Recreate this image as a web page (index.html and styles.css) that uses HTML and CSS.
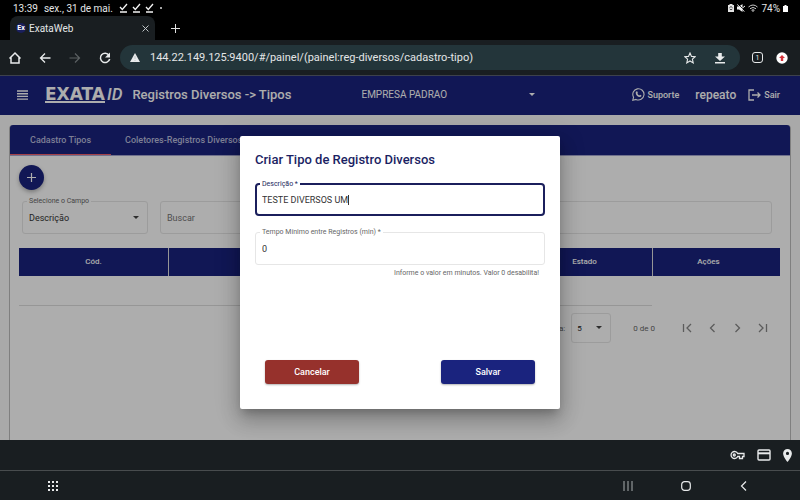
FILE: index.html
```html
<!DOCTYPE html>
<html lang="pt-BR">
<head>
<meta charset="utf-8">
<meta name="viewport" content="width=device-width, initial-scale=1">
<title>ExataWeb</title>
<link rel="stylesheet" href="styles.css">
</head>
<body>
<div class="status">
  <span>13:39</span>
  <span>sex., 31 de mai.</span>
  <span class="checks">
    <svg width="9" height="10" viewBox="0 0 9 10"><path d="M1 4l2.300 2.500L8 1M1 9h7"/></svg>
    <svg width="9" height="10" viewBox="0 0 9 10"><path d="M1 4l2.300 2.500L8 1M1 9h7"/></svg>
    <svg width="9" height="10" viewBox="0 0 9 10"><path d="M1 4l2.300 2.500L8 1M1 9h7"/></svg>
  </span>
  <span class="dot"></span>
  <span class="status-right">
    <svg width="6" height="8" viewBox="0 0 6 8"><path fill="#e4e4e4" d="M1.500 0h3v1H6v7H0V1h1.500z"/><path d="M1.700 4.800a1.400 1.400 0 0 0 2.600 0M1.700 3.600a1.400 1.400 0 0 1 2.600 0" fill="none" stroke="#111" stroke-width=".8"/></svg>
    <svg width="8" height="8" viewBox="0 0 8 8"><path fill="#f0f0f0" d="M0 2.500h2L5.500 0v8L2 5.500H0z"/><path d="M1 0l7 7" stroke="#000" stroke-width=".8"/><path d="M.3 .5L7.500 7.700M5.500 4L8 2" stroke="#f0f0f0"/></svg>
    <svg width="10" height="8" viewBox="0 0 10 8" fill="none" stroke="#c8c8c8"><path d="M.5 3Q5-1 9.500 3M2 4.700q3-2.500 6 0M3.500 6.300q1.500-1.200 3 0"/><path d="M5 6v2"/></svg>
    <span>74%</span>
    <svg width="5" height="7" viewBox="0 0 5 7"><path fill="#fff" d="M1.500 0h2v1H5v6H0V1h1.500z"/></svg>
  </span>
</div>
<div class="tabstrip">
  <div class="browser-tab">
    <span class="favicon">Ex</span>
    <span class="tab-title">ExataWeb</span>
    <button class="icon-btn" aria-label="Fechar guia"><svg width="7" height="7" viewBox="0 0 7 7"><path d="M.5.5l6 6M6.500.5l-6 6" stroke="#bfc4c6"/></svg></button>
  </div>
  <button class="icon-btn" aria-label="Nova guia"><svg width="9" height="9" viewBox="0 0 9 9"><path d="M4.500 0v9M0 4.500h9" stroke="#e0e0e0"/></svg></button>
</div>
<div class="toolbar">
  <button class="icon-btn" aria-label="Início"><svg width="14" height="14" viewBox="0 0 14 14"><path d="M1.500 7.500L7 2l5.500 5.500M3 6.500V12h8V6.500" fill="none" stroke="#e8eaeb" stroke-width="1.500"/></svg></button>
  <button class="icon-btn" aria-label="Voltar"><svg width="14" height="14" viewBox="0 0 14 14"><path d="M12.500 7h-10M7 2.500L2.500 7l4.500 4.500" fill="none" stroke="#e8eaeb" stroke-width="1.300"/></svg></button>
  <button class="icon-btn" aria-label="Avançar"><svg width="14" height="14" viewBox="0 0 14 14"><path d="M1.500 7h10M7 2.500l4.500 4.500L7 11.500" fill="none" stroke="#5c6163" stroke-width="1.200"/></svg></button>
  <button class="icon-btn" aria-label="Recarregar"><svg width="14" height="14" viewBox="0 0 14 14"><path d="M11 4.200A4.700 4.700 0 1 0 11.700 8" fill="none" stroke="#e8eaeb" stroke-width="1.500"/><path d="M12 1.500V6.500H7z" fill="#e8eaeb"/></svg></button>
  <div class="address">
    <svg width="10" height="9" viewBox="0 0 10 9"><path d="M5 0l5 9H0z" fill="#e8eaeb"/><path d="M5 3v3M5 7v1" stroke="#b7bfc1" stroke-width=".8"/></svg>
    <input class="url" aria-label="Endereço" value="144.22.149.125:9400/#/painel/(painel:reg-diversos/cadastro-tipo)">
    <button class="icon-btn" aria-label="Favoritar"><svg width="12" height="12" viewBox="0 0 12 12"><path d="M6 1l1.500 3.400 3.700.3-2.800 2.500.8 3.700L6 9l-3.200 1.900.8-3.700L.8 4.700l3.700-.3z" fill="none" stroke="#e8eaeb" stroke-width="1.100"/></svg></button>
    <button class="icon-btn" aria-label="Baixar"><svg width="10" height="12" viewBox="0 0 10 12"><path d="M3.200 1h3.600v3.500H10L5 9 0 4.500h3.200zM0 10h10v1.500H0z" fill="#e8eaeb"/></svg></button>
  </div>
  <button class="tab-count" aria-label="Guias abertas">1</button>
  <button class="icon-btn" aria-label="Atualizar navegador"><svg width="12" height="12" viewBox="0 0 12 12"><circle cx="6" cy="6" r="5.700" fill="#fff"/><path d="M6 3l3 3H7.200v3H4.800V6H3z" fill="#d3323a"/></svg></button>
</div>
<div class="page">
  <header class="app-header">
    <button class="icon-btn" aria-label="Menu"><svg width="11" height="10" viewBox="0 0 11 10"><path d="M0 1h11M0 3.700h11M0 6.400h11M0 9.100h11" stroke="#fff" stroke-width="1.400"/></svg></button>
    <div class="logo"><b>EXATA</b><i>ID</i></div>
    <h1>Registros Diversos -&gt; Tipos</h1>
    <div class="select-wrap company">
      <select aria-label="Empresa"><option>EMPRESA PADRAO</option></select>
      <svg class="caret" width="6" height="3" viewBox="0 0 6 3"><path d="M0 0h6L3 3z" fill="#fff"/></svg>
    </div>
    <a class="support" href="#suporte"><svg width="13" height="13" viewBox="0 0 13 13"><path d="M.8 12.200l.8-3A5.600 5.600 0 1 1 4 11.400z" fill="none" stroke="#fff" stroke-width="1.100"/><path d="M4.200 3.500l1-.2.7 1.600-.5.8q.7 1.200 1.900 1.800l.7-.7 1.500.7q0 1.400-1.500 1.600Q4 8.500 3.700 4.900q0-.9.500-1.400z" fill="#fff"/></svg>Suporte</a>
    <span class="user">repeato</span>
    <a class="exit" href="#sair"><svg width="13" height="12" viewBox="0 0 13 12" fill="none" stroke="#fff" stroke-width="1.300"><path d="M6 1H1v10h5M4 6h8M9.500 3.500L12 6 9.500 8.500"/></svg>Sair</a>
  </header>
  <main class="card">
    <nav class="tabs">
      <a class="active" href="#tipos">Cadastro Tipos</a>
      <a href="#coletores">Coletores-Registros Diversos</a>
    </nav>
    <div class="card-body">
      <button class="fab" aria-label="Adicionar"><svg width="9" height="9" viewBox="0 0 9 9"><path d="M4.500 0v9M0 4.500h9" stroke="#fff" stroke-width="1.200"/></svg></button>
      <div class="filters">
        <div class="field select-wrap filter-field">
          <label for="campo">Selecione o Campo</label>
          <select id="campo"><option>Descrição</option></select>
          <svg class="caret" width="6" height="3" viewBox="0 0 6 3"><path d="M0 0h6L3 3z" fill="#444"/></svg>
        </div>
        <div class="field search-field">
          <input type="text" aria-label="Buscar" placeholder="Buscar">
        </div>
      </div>
      <table>
        <colgroup><col class="c-code"><col><col class="c-state"><col class="c-actions"></colgroup>
        <thead><tr><th>Cód.</th><th>Descrição</th><th>Estado</th><th class="actions">Ações</th></tr></thead>
        <tbody><tr><td></td><td></td><td></td><td class="blank"></td></tr></tbody>
      </table>
      <div class="paginator">
        <label for="itens">Itens por página:</label>
        <div class="select-wrap page-size">
          <select id="itens"><option>5</option></select>
          <svg class="caret" width="6" height="3" viewBox="0 0 6 3"><path d="M0 0h6L3 3z" fill="#444"/></svg>
        </div>
        <span class="range">0 de 0</span>
        <div class="pager">
          <button class="icon-btn" aria-label="Primeira página"><svg width="11" height="10" viewBox="0 0 11 10"><path d="M1.500 1v8M9 1L5 5l4 4"/></svg></button>
          <button class="icon-btn" aria-label="Página anterior"><svg width="11" height="10" viewBox="0 0 11 10"><path d="M7.500 1l-4 4 4 4"/></svg></button>
          <button class="icon-btn" aria-label="Próxima página"><svg width="11" height="10" viewBox="0 0 11 10"><path d="M3.500 1l4 4-4 4"/></svg></button>
          <button class="icon-btn" aria-label="Última página"><svg width="11" height="10" viewBox="0 0 11 10"><path d="M2 1l4 4-4 4M9.500 1v8"/></svg></button>
        </div>
      </div>
    </div>
  </main>
  <div class="backdrop">
    <form class="dialog" role="dialog" aria-labelledby="dialog-title">
      <h2 id="dialog-title">Criar Tipo de Registro Diversos</h2>
      <div class="field focused">
        <label for="descricao">Descrição *</label>
        <input type="text" id="descricao" value="TESTE DIVERSOS UM">
        <span class="text-cursor"></span>
      </div>
      <div class="field">
        <label for="tempo">Tempo Mínimo entre Registros (min) *</label>
        <input type="text" id="tempo" value="0">
      </div>
      <p class="hint">Informe o valor em minutos. Valor 0 desabilita!</p>
      <div class="buttons">
        <button type="button" class="cancel">Cancelar</button>
        <button type="button" class="save">Salvar</button>
      </div>
    </form>
  </div>
</div>
<div class="autofill">
  <button class="icon-btn" aria-label="Senhas"><svg width="15" height="10" viewBox="0 0 15 10" fill="none" stroke="#e8eaeb" stroke-width="1.300"><path d="M7.700 3.500A3.500 3.500 0 1 0 7.700 6.500H9.500V8.500h3V6.500H14v-3z"/><circle cx="4.300" cy="5" r="1"/></svg></button>
  <button class="icon-btn" aria-label="Cartões"><svg width="14" height="12" viewBox="0 0 14 12"><rect x="1" y="1" width="12" height="10" rx="1" fill="none" stroke="#e8eaeb" stroke-width="1.400"/><path d="M1 4.300h12" stroke="#e8eaeb" stroke-width="2"/></svg></button>
  <button class="icon-btn" aria-label="Endereços"><svg width="9" height="13" viewBox="0 0 9 13"><path fill-rule="evenodd" d="M4.500 0A4.400 4.400 0 0 0 .1 4.400C.1 7.700 4.500 13 4.500 13S8.900 7.700 8.900 4.400A4.400 4.400 0 0 0 4.500 0zm0 6a1.600 1.600 0 1 1 0-3.200 1.600 1.600 0 0 1 0 3.200z" fill="#e8eaeb"/></svg></button>
</div>
<div class="system-nav">
  <button class="icon-btn apps" aria-label="Aplicativos"><svg width="10" height="10" viewBox="0 0 10 10"><path d="M0 1h10M0 5h10M0 9h10" stroke="#e8eaeb" stroke-width="2" stroke-dasharray="2 2"/></svg></button>
  <div class="nav-keys">
    <button class="icon-btn" aria-label="Recentes"><svg width="10" height="10" viewBox="0 0 10 10"><path d="M1 0v10M5 0v10M9 0v10" stroke="#a9adaf"/></svg></button>
    <button class="icon-btn" aria-label="Tela inicial"><svg width="10" height="10" viewBox="0 0 10 10"><rect x=".7" y=".7" width="8.600" height="8.600" rx="2.800" fill="none" stroke="#e8eaeb" stroke-width="1.200"/></svg></button>
    <button class="icon-btn" aria-label="Voltar"><svg width="10" height="10" viewBox="0 0 10 10"><path d="M7 .5L2.500 5 7 9.500" fill="none" stroke="#e8eaeb" stroke-width="1.200"/></svg></button>
  </div>
</div>
</body>
</html>
```
FILE: styles.css
```css
* { box-sizing: border-box; }
body {
  margin: 0;
  height: 100vh;
  display: flex;
  flex-direction: column;
  background: #000;
  color: #e4e6e7;
  font-family: Roboto, "Liberation Sans", sans-serif;
  font-size: 8px;
}
svg { display: block; flex: none; }
button, input, select { font: inherit; color: inherit; border: 0; margin: 0; padding: 0; background: none; }
select { appearance: none; width: 100%; }
input { min-width: 0; outline: none; }
a { color: inherit; text-decoration: none; }
.icon-btn { display: grid; place-items: center; flex: none; }

/* Device status bar and browser chrome */
.status { display: flex; align-items: center; gap: 6px; height: 16px; padding: 0 12px 0 13px; font-size: 10px; }
.checks { display: flex; gap: 4px; }
.checks path { fill: none; stroke: #f4f4f4; stroke-width: 1.300; }
.dot { width: 2px; height: 2px; border-radius: 50%; background: #ddd; }
.status-right { display: flex; align-items: center; gap: 3px; margin-left: auto; }
.tabstrip { display: flex; align-items: center; gap: 16px; height: 24px; padding-left: 10px; }
.browser-tab { display: flex; align-items: center; gap: 3px; width: 145px; height: 24px; padding: 0 6px; border-radius: 8px 8px 0 0; background: #191e21; font-size: 10px; }
.browser-tab .icon-btn { margin-left: auto; }
.favicon { width: 10px; height: 10px; border-radius: 50%; background: #1a1f5c; color: #fff; font-size: 7px; font-weight: 700; line-height: 10px; text-align: center; }
.toolbar { display: flex; align-items: center; gap: 16px; height: 35px; padding: 0 12px 0 8px; background: #191e21; }
.address { display: flex; align-items: center; gap: 10px; flex: 1; height: 25px; margin-left: -8px; margin-right: -4px; padding: 0 15px 0 10px; border-radius: 13px; background: #23353a; }
.address .icon-btn + .icon-btn { margin-left: 9px; }
.url { flex: 1; font-size: 11px; }
.tab-count { width: 11px; height: 11px; margin-right: -3px; border: 1px solid #e8eaeb; border-radius: 3px; font-size: 7px; line-height: 8px; }

/* Application */
.page { position: relative; flex: 1; display: flex; flex-direction: column; min-height: 0; overflow: hidden; background: #fafafa; color: #333; }
.app-header { display: flex; align-items: center; flex: none; height: 40px; padding: 0 20px 2px 17px; border-top: 1px solid #5b6070; background: #1a237e; color: #fff; font-weight: 500; }
.logo { display: flex; align-items: flex-start; gap: 2px; margin: 0 10px 0 17px; }
.logo b { border-bottom: 2px solid #fff; font: 700 17px/14px "DejaVu Sans", sans-serif; }
.logo i { font-size: 17px; line-height: 14px; }
h1 { margin: 0; font-size: 13px; font-weight: 500; white-space: nowrap; }
.select-wrap { position: relative; }
.caret { position: absolute; right: 8px; top: 50%; margin-top: -2px; pointer-events: none; }
.company { width: 182px; margin: 0 auto 0 70px; font-size: 10px; font-weight: 400; }
.support, .exit { display: flex; align-items: center; gap: 3px; font-size: 9px; }
.user { margin: 0 12px 0 16px; font-size: 12px; }
.card { flex: 1; margin: 10px 9px 0; border: 1px solid #bbb; border-width: 0 1px; border-radius: 4px 4px 0 0; background: #fff; }
.tabs { display: flex; height: 31px; border-bottom: 1px solid #a5a7d0; border-radius: 3px 3px 0 0; background: #1a237e; color: #b9bcdb; font-size: 9px; font-weight: 500; line-height: 30px; }
.tabs a { padding: 0 14px; }
.tabs .active { padding: 0 20px; border-bottom: 1px solid #f2606c; }
.card-body { padding: 9px 10px 9px 9px; }
.fab { display: grid; place-items: center; width: 25px; height: 25px; border-radius: 50%; background: #1a237e; box-shadow: 0 2px 4px rgba(0, 0, 0, .3); }
.filters { display: flex; gap: 12px; margin: 11px 8px 14px 3px; }
.field { position: relative; display: flex; align-items: center; height: 33px; border: 1px solid #e6e6e6; border-radius: 3px; }
.field label { position: absolute; left: 4px; top: -5px; padding: 0 2px; background: #fff; color: #666; font-size: 7px; line-height: 8px; white-space: nowrap; }
.field input, .field select { width: 100%; height: 100%; padding: 0 6px; font-size: 9px; }
.filter-field { width: 126px; }
.search-field { flex: 1; }
table { width: 100%; table-layout: fixed; border-collapse: separate; border-spacing: 0; }
.c-code { width: 149px; }
.c-state { width: 136px; }
.c-actions { width: 128px; }
th { height: 28px; padding: 0 0 2px; border-left: 1px solid #ddd; background: #1a237e; color: #fff; font-size: 8px; font-weight: 500; }
th:first-child { border-left: 0; }
th.actions { padding-right: 16px; }
td { height: 30px; padding: 0; border-bottom: 1px solid #ddd; }
td.blank { border: 0; }
.paginator { display: flex; align-items: center; justify-content: flex-end; height: 44px; padding-right: 12px; color: #666; }
.page-size { width: 40px; height: 30px; margin: 0 22px 0 6px; border: 1px solid #e6e6e6; border-radius: 3px; color: #222; }
.page-size select { height: 100%; padding-left: 5px; }
.pager { display: flex; gap: 14px; margin-left: 27px; }
.pager path { fill: none; stroke: #888; stroke-width: 1.300; }

/* Dialog */
.backdrop { position: absolute; inset: 0; display: flex; justify-content: center; align-items: flex-start; padding-top: 61px; background: rgba(0, 0, 0, .32); }
.dialog { width: 40%; min-width: 320px; padding: 15px; border-radius: 2px; background: #fff; box-shadow: 0 6px 8px -3px rgba(0, 0, 0, .2), 0 12px 19px 1px rgba(0, 0, 0, .16), 0 4px 23px 4px rgba(0, 0, 0, .14); }
h2 { margin: 0 0 14px; color: #1b1f63; font-size: 12px; font-weight: 500; line-height: 18px; }
.dialog .field + .field { margin-top: 16px; }
.dialog .focused { border: 2px solid #1b1f5c; border-radius: 4px; }
.dialog .focused label { left: 3px; color: #1b1f5c; }
.dialog .focused input { field-sizing: content; width: auto; padding: 0 0 0 5px; }
.text-cursor { width: 1px; height: 10px; background: #333; }
.hint { margin: 3px 6px 0; color: #666; font-size: 7px; line-height: 10px; text-align: right; }
.buttons { display: flex; justify-content: space-between; margin: 82px 10px 10px; }
.buttons button { width: 94px; height: 24px; border-radius: 3px; box-shadow: 0 1px 2px rgba(0, 0, 0, .3); color: #fff; font-size: 9px; font-weight: 500; }
.buttons .cancel { background: #96312c; }
.buttons .save { background: #1a237e; }
h2 { font-size: 13px; }

/* Keyboard accessory and system navigation */
.autofill { display: flex; align-items: center; justify-content: flex-end; gap: 12px; height: 30px; padding-right: 8px; background: #191e21; }
.system-nav { display: flex; align-items: center; justify-content: space-between; height: 30px; padding: 0 51px 0 48px; border-top: 1px solid #484c4e; background: #191e21; }
.nav-keys { display: flex; gap: 48px; }
```
